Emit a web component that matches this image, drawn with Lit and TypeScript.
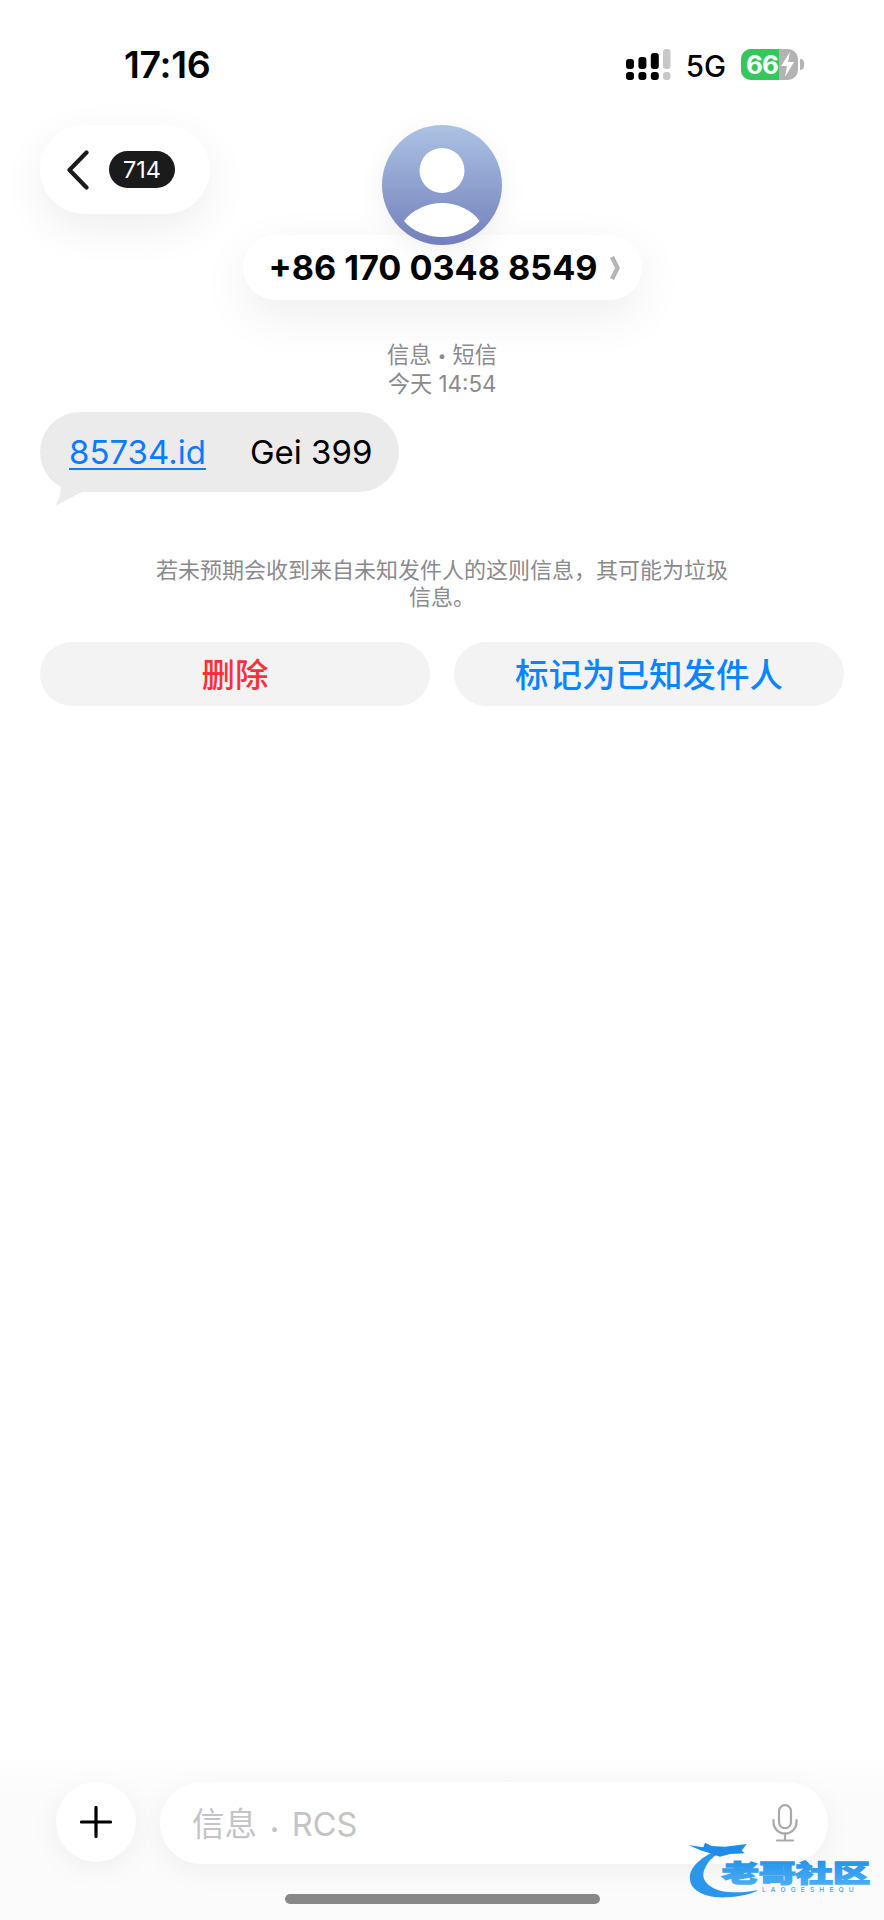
import { LitElement, html, css, svg } from "lit";
import { customElement } from "lit/decorators.js";

// Signal meter: upper row grows left to right, the last column is dimmed.
const signalIcon = svg`
  <svg width="45" height="32" viewBox="0 0 45 32">
    <g fill="#000">
      <rect x="0" y="10" width="8" height="10" rx="3"/>
      <rect x="12.4" y="8" width="8" height="12" rx="3"/>
      <rect x="24.8" y="4" width="8" height="16" rx="3"/>
      <rect x="0" y="23" width="8" height="8" rx="3"/>
      <rect x="12.4" y="23" width="8" height="8" rx="3"/>
      <rect x="24.8" y="23" width="8" height="8" rx="3"/>
    </g>
    <g fill="#c8c8c8">
      <rect x="37" y="0" width="7.5" height="20" rx="3"/>
      <rect x="37" y="23" width="7.5" height="8" rx="3"/>
    </g>
  </svg>`;

const boltIcon = svg`
  <svg class="bolt" width="15" height="25" viewBox="0 0 15 25">
    <path d="M10 0 L1 14 H7 L5 25 L14 10 H8 Z" fill="#fff"/>
  </svg>`;

const avatarIcon = svg`
  <svg width="120" height="120" viewBox="0 0 120 120">
    <defs>
      <linearGradient id="avatarFill" x1="0" y1="0" x2="0" y2="1">
        <stop offset="0" stop-color="#abc3e3"/>
        <stop offset="1" stop-color="#737fbb"/>
      </linearGradient>
    </defs>
    <circle cx="60" cy="60" r="60" fill="url(#avatarFill)"/>
    <circle cx="60" cy="45.5" r="22.5" fill="#fff"/>
    <path d="M22 96 C30 85 45 78 60 78 C75 78 90 85 97.5 96 C90 106 75 112 60 112 C45 112 30 106 22 96 Z" fill="#fff"/>
  </svg>`;

const micIcon = svg`
  <svg width="26" height="38" viewBox="0 0 26 38" fill="none" stroke="#a9a9a9" stroke-width="2.2" stroke-linecap="round">
    <rect x="7" y="1.2" width="12" height="23" rx="6"/>
    <path d="M1.5 16 V18 C1.5 24.5 6.5 29.5 13 29.5 C19.5 29.5 24.5 24.5 24.5 18 V16"/>
    <path d="M13 29.5 V36.5 M5 36.5 H21"/>
  </svg>`;

// Community badge in the lower corner: dragon ring plus wordmark.
const badge = svg`
  <svg class="badge" width="214" height="100" viewBox="0 0 642 300">
    <defs>
      <linearGradient id="badgeFill" x1="0" y1="0" x2="0" y2="1">
        <stop offset="0" stop-color="#1f8de8"/>
        <stop offset="1" stop-color="#4fb2f5"/>
      </linearGradient>
    </defs>
    <path d="M130 95 C80 120 55 150 60 180 C65 215 110 235 170 232 C210 230 245 222 265 210 C225 218 185 220 150 212 C110 200 90 175 105 145 C112 130 125 110 150 100 Z" fill="#2a96ec"/>
    <path d="M55 75 L100 82 L105 68 L125 78 L165 80 L230 72 L215 92 L225 100 L180 102 L150 110 L120 100 L95 92 Z" fill="#1f8de8"/>
    <text x="155" y="186" textLength="445" lengthAdjust="spacingAndGlyphs" font-size="70" font-weight="900" fill="url(#badgeFill)" stroke="url(#badgeFill)" stroke-width="4" font-family='"Noto Sans CJK SC", sans-serif'>老哥社区</text>
    <text x="276" y="216" textLength="275" font-size="20" font-weight="500" fill="#3ea3ee" font-family="Inter, sans-serif">LAOGESHEQU</text>
  </svg>`;

@customElement("app-root")
export class AppRoot extends LitElement {
  static styles = css`
    :host {
      display: block;
      width: 884px;
      font-family: Inter, "Noto Sans CJK SC", "Noto Sans", sans-serif;
      color: #000;
    }
    * { box-sizing: border-box; }
    .page {
      position: relative;
      height: 1920px;
      background: #fff;
      display: flex;
      flex-direction: column;
      overflow: hidden;
    }

    .status {
      height: 125px;
      flex: none;
      display: flex;
      justify-content: space-between;
      padding: 45px 80px 0 124px;
    }
    .time { font-size: 37.5px; font-weight: 600; line-height: 40px; letter-spacing: -0.3px; }
    .indicators { display: flex; align-items: flex-start; height: 36px; margin-top: 4px; }
    .net { font-size: 29.5px; font-weight: 500; line-height: 34px; margin: 0 15px 0 15px; }
    .battery {
      position: relative;
      width: 57px;
      height: 31px;
      border-radius: 10px;
      background: #b3b3b3;
    }
    .battery-level {
      width: 38px;
      height: 31px;
      border-radius: 10px 0 0 10px;
      background: #35c759;
    }
    .battery-text {
      position: absolute;
      left: 5px;
      top: 0;
      font-size: 26px;
      line-height: 31px;
      font-weight: 700;
      color: #fff;
      letter-spacing: -1px;
    }
    .bolt { position: absolute; right: 3px; top: 3px; }
    .nub {
      width: 4px;
      height: 11px;
      margin: 10px 0 0 2px;
      background: #b3b3b3;
      border-radius: 0 4px 4px 0;
    }

    .header {
      flex: none;
      display: grid;
      grid-template-columns: 1fr auto 1fr;
      padding: 0 40px;
      align-items: start;
    }
    .back {
      justify-self: start;
      width: 170px;
      height: 89px;
      border-radius: 45px;
      background: #fff;
      box-shadow: 0 14px 44px rgba(0, 0, 0, 0.07);
      display: flex;
      align-items: center;
      gap: 20px;
      padding-left: 27px;
    }
    .count {
      width: 66px;
      height: 37px;
      border-radius: 19px;
      background: #1b1b1b;
      color: #fff;
      font-size: 23.5px;
      line-height: 37px;
      text-align: center;
    }
    .contact { display: flex; flex-direction: column; align-items: center; }
    .avatar {
      position: relative;
      z-index: 1;
      height: 120px;
      filter: drop-shadow(0 6px 12px rgba(0, 0, 0, 0.06));
    }
    .name {
      margin-top: -10px;
      width: 399px;
      height: 65px;
      border-radius: 33px;
      background: #fff;
      box-shadow: 0 16px 50px rgba(0, 0, 0, 0.07);
      display: flex;
      align-items: center;
      gap: 11px;
      padding-left: 26px;
      font-size: 34.2px;
      font-weight: 700;
      white-space: nowrap;
    }

    .meta {
      flex: none;
      margin-top: 41px;
      text-align: center;
      font-size: 22.3px;
      line-height: 27.5px;
      color: #8a8a8e;
    }
    .dot { font-size: 15px; vertical-align: 2px; }

    .bubble {
      position: relative;
      align-self: flex-start;
      flex: none;
      margin: 15px 0 0 40px;
      width: 359px;
      height: 80px;
      border-radius: 40px;
      background: #ebebeb;
      display: flex;
      align-items: center;
      padding-left: 29px;
      gap: 44px;
      font-size: 33px;
    }
    .link { color: #0a7aff; text-decoration: underline; text-underline-offset: 4px; text-decoration-thickness: 2px; }
    .tail { position: absolute; left: 14px; top: 62px; }

    .notice {
      flex: none;
      margin: 65px auto 0;
      width: 578px;
      text-align: center;
      font-size: 22px;
      line-height: 27px;
      color: #8a8a8e;
    }

    .actions {
      flex: none;
      display: grid;
      grid-template-columns: 1fr 1fr;
      gap: 24px;
      padding: 0 40px;
      margin-top: 31px;
    }
    .action {
      height: 64px;
      border-radius: 32px;
      background: #f3f3f3;
      display: flex;
      align-items: center;
      justify-content: center;
      padding-bottom: 4px;
      font-size: 33.5px;
      font-weight: 500;
    }
    .danger { color: #f5323e; }
    .primary { color: #0a84ff; }

    .spacer { flex: 1; }

    .composer {
      flex: none;
      height: 170px;
      padding: 32px 56px 0;
      display: flex;
      gap: 24px;
      align-items: flex-start;
      background: linear-gradient(#ffffff, #fbfbfb 30%, #fbfbfb);
    }
    .plus {
      flex: none;
      width: 80px;
      height: 80px;
      border-radius: 50%;
      background: #fff;
      box-shadow: 0 6px 30px rgba(0, 0, 0, 0.05);
      display: flex;
      align-items: center;
      justify-content: center;
    }
    .input {
      flex: none;
      width: 668px;
      height: 82px;
      border-radius: 41px;
      background: #fff;
      box-shadow: 0 6px 30px rgba(0, 0, 0, 0.05);
      display: flex;
      align-items: center;
      justify-content: space-between;
      padding: 0 30px 0 32px;
      font-size: 32.5px;
      color: #c4c4c6;
    }
    .placeholder { margin-bottom: 4px; }
    .placeholder .dot { margin: 0 4px; }
    .home {
      position: absolute;
      left: 285px;
      bottom: 16px;
      width: 315px;
      height: 10px;
      border-radius: 5px;
      background: #888;
    }
    .badge { position: absolute; right: 0; bottom: 0; }
  `;

  render() {
    return html`
      <div class="page">
        <div class="status">
          <div class="time">17:16</div>
          <div class="indicators">
            ${signalIcon}
            <span class="net">5G</span>
            <div class="battery">
              <div class="battery-level"></div>
              <span class="battery-text">66</span>
              ${boltIcon}
            </div>
            <div class="nub"></div>
          </div>
        </div>

        <div class="header">
          <div class="back">
            <svg width="22" height="40" viewBox="0 0 22 40" fill="none" stroke="#1b1b1b" stroke-width="4.2" stroke-linecap="round" stroke-linejoin="round">
              <path d="M19.5 2.5 L2.5 20 L19.5 37.5"/>
            </svg>
            <span class="count">714</span>
          </div>
          <div class="contact">
            <div class="avatar">${avatarIcon}</div>
            <div class="name">
              <span>+86 170 0348 8549</span>
              <svg width="12" height="24" viewBox="0 0 12 24" fill="none" stroke="#b5b5b5" stroke-width="4.5" stroke-linejoin="round">
                <path d="M3 1 L8.5 12 L3 23"/>
              </svg>
            </div>
          </div>
          <div></div>
        </div>

        <div class="meta">信息 <span class="dot">•</span> 短信<br />今天 14:54</div>

        <div class="bubble">
          <span class="link">85734.id</span>
          <span>Gei 399</span>
          <svg class="tail" width="34" height="32" viewBox="0 0 34 32">
            <path d="M5 0 C8 10 8 20 2 31 C12 28 20 20 32 17 Z" fill="#ebebeb"/>
          </svg>
        </div>

        <div class="notice">若未预期会收到来自未知发件人的这则信息，其可能为垃圾信息。</div>

        <div class="actions">
          <div class="action danger">删除</div>
          <div class="action primary">标记为已知发件人</div>
        </div>

        <div class="spacer"></div>

        <div class="composer">
          <div class="plus">
            <svg width="32" height="32" viewBox="0 0 32 32" stroke="#000" stroke-width="3.2" stroke-linecap="round">
              <path d="M16 1.5 V30.5 M1.5 16 H30.5"/>
            </svg>
          </div>
          <div class="input">
            <span class="placeholder">信息 <span class="dot">•</span> RCS</span>
            ${micIcon}
          </div>
        </div>
        <div class="home"></div>
        ${badge}
      </div>
    `;
  }
}
